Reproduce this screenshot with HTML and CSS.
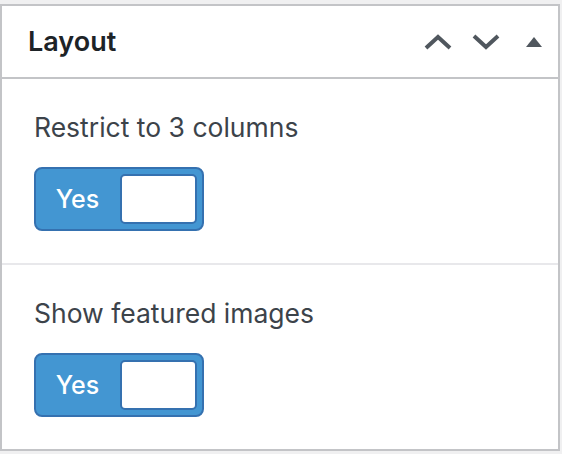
FILE: index.html
```html
<!DOCTYPE html>
<html lang="en">
<head>
    <meta charset="UTF-8">
    <meta name="viewport" content="width=device-width, initial-scale=1.0">
    <title>Layout panel</title>
    <link rel="stylesheet" href="styles.css">
</head>
<body>
    <div class="panel">
        <div class="panel-header">
            <h2 class="panel-title">Layout</h2>
            <button class="panel-btn" aria-label="Move up">
                <svg width="28" height="16" viewBox="0 0 28 16">
                    <polyline points="2,14 14,3 26,14" fill="none" stroke="#50575e" stroke-width="4"/>
                </svg>
            </button>
            <button class="panel-btn" aria-label="Move down">
                <svg width="28" height="16" viewBox="0 0 28 16">
                    <polyline points="2,2 14,13 26,2" fill="none" stroke="#50575e" stroke-width="4"/>
                </svg>
            </button>
            <button class="panel-btn" aria-label="Toggle panel">
                <svg width="16" height="10" viewBox="0 0 16 10">
                    <polygon points="8,0 16,10 0,10" fill="#50575e"/>
                </svg>
            </button>
        </div>

        <div class="field">
            <div class="field-label">Restrict to 3 columns</div>
            <div class="toggle">
                <span class="toggle-text">Yes</span>
                <span class="toggle-knob"></span>
            </div>
        </div>

        <div class="field">
            <div class="field-label">Show featured images</div>
            <div class="toggle">
                <span class="toggle-text">Yes</span>
                <span class="toggle-knob"></span>
            </div>
        </div>
    </div>
</body>
</html>
```

FILE: styles.css
```css
* {
    margin: 0;
    padding: 0;
    box-sizing: border-box;
}

body {
    background: #f0f0f1;
    font-family: Inter, "Open Sans", sans-serif;
}

/* Panel */
.panel {
    margin-top: 4px;
    width: 560px;
    background: #fff;
    border: 2px solid #c3c4c7;
}

.panel-header {
    display: flex;
    align-items: center;
    height: 73px;
    padding-left: 26px;
    border-bottom: 2px solid #c3c4c7;
}

.panel-title {
    flex: 1;
    font-size: 27px;
    font-weight: 600;
    color: #1d2327;
}

.panel-btn {
    width: 48px;
    height: 48px;
    border: none;
    background: none;
    display: flex;
    align-items: center;
    justify-content: center;
    cursor: pointer;
}

/* Fields */
.field {
    padding: 28px 32px 32px;
    border-bottom: 2px solid #e8e8eb;
}

.field:last-child {
    border-bottom: none;
}

.field-label {
    font-size: 26.5px;
    line-height: 40px;
    color: #3c434a;
    margin-bottom: 20px;
}

/* Toggle */
.toggle {
    display: flex;
    align-items: center;
    width: 170px;
    height: 64px;
    padding: 5px;
    background: #4396d2;
    border: 2px solid #3571b0;
    border-radius: 8px;
}

.toggle-text {
    flex: 1;
    text-align: center;
    padding-right: 6px;
    color: #fff;
    font-size: 25px;
    font-weight: 500;
}

.toggle-knob {
    width: 77px;
    height: 50px;
    background: #fff;
    border: 2px solid #3571b0;
    border-radius: 5px;
}
```
